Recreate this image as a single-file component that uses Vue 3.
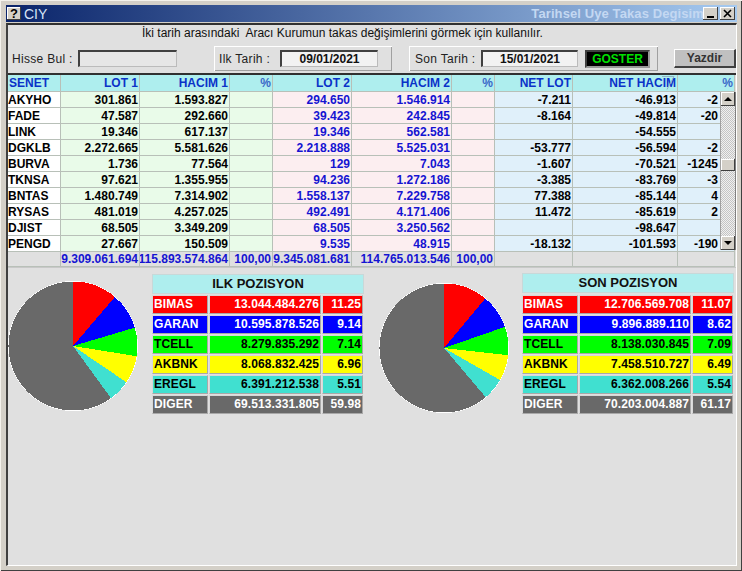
<template>
    <div class="window">
        <div class="title-bar">
            <span class="help-btn">?</span>
            <span class="title-left">CIY</span>
            <span class="title-right">Tarihsel Uye Takas Degisim</span>
            <span class="win-btn min-btn"></span>
            <span class="win-btn close-btn">
                <svg width="9" height="9" viewBox="0 0 9 9">
                    <path d="M1 1 L8 8 M8 1 L1 8" stroke="#000" stroke-width="1.6" fill="none" />
                </svg>
            </span>
        </div>
        <div class="client">
            <div class="info-line">İki tarih arasındaki&nbsp; Aracı Kurumun takas değişimlerini görmek için kullanılır.</div>

            <div class="filter-row">
                <span class="find-label">Hisse Bul :</span>
                <span class="field find-field"></span>
                <div class="date-panel first-panel">
                    <span class="date-label">Ilk Tarih :</span>
                    <span class="field date-field">09/01/2021</span>
                </div>
                <div class="date-panel second-panel">
                    <span class="date-label">Son Tarih :</span>
                    <span class="field date-field">15/01/2021</span>
                    <span class="go-btn">GOSTER</span>
                </div>
                <span class="print-btn"><span>Yazdir</span></span>
            </div>

            <div class="grid">
                <div v-for="(h, i) in headers" :key="h.key" class="cell head" :class="{ left: i === 0, light: h.label === '%' }">
                    <span>{{ h.label }}</span>
                </div>
                <template v-for="row in rows" :key="row[0]">
                    <div v-for="(val, i) in row" :key="i" class="cell" :class="cellClass(i)">
                        <span>{{ val }}</span>
                    </div>
                </template>
                <div v-for="(val, i) in totals" :key="'t' + i" class="cell total">
                    <span>{{ val }}</span>
                </div>

                <svg class="sort-mark" width="14" height="14" viewBox="0 0 14 14">
                    <path d="M1 0.5 H13 L6 13.5" fill="none" stroke="#8fb4c4" stroke-width="1" />
                </svg>
                <div class="scrollbar">
                    <span class="scroll-btn"><i class="arrow up"></i></span>
                    <span class="scroll-thumb"></span>
                    <span class="scroll-btn"><i class="arrow down"></i></span>
                </div>
            </div>

            <div class="positions">
                <div v-for="(pos, p) in positions" :key="pos.title" class="position" :class="'pos-' + p">
                    <svg class="pie" width="130" height="130" viewBox="0 0 130 130" shape-rendering="crispEdges">
                        <circle cx="65" cy="65" r="65" fill="#fff" />
                        <path v-for="s in slices(pos.items)" :key="s.name" :d="s.d" :fill="s.color" />
                    </svg>
                    <div class="pos-table">
                        <div class="pos-title">{{ pos.title }}</div>
                        <div v-for="item in pos.items" :key="item.name" class="pos-row"
                            :style="{ '--row-bg': item.color, '--row-fg': item.text }">
                            <span class="pos-cell pos-name">{{ item.name }}</span>
                            <span class="pos-cell pos-val">{{ item.value }}</span>
                            <span class="pos-cell pos-pct">{{ item.pct }}</span>
                        </div>
                    </div>
                </div>
            </div>
        </div>
    </div>
</template>

<script setup>
const headers = [
    { key: 'senet', label: 'SENET' },
    { key: 'lot1', label: 'LOT 1' },
    { key: 'hacim1', label: 'HACIM 1' },
    { key: 'p1', label: '%' },
    { key: 'lot2', label: 'LOT 2' },
    { key: 'hacim2', label: 'HACIM 2' },
    { key: 'p2', label: '%' },
    { key: 'netlot', label: 'NET LOT' },
    { key: 'nethacim', label: 'NET HACIM' },
    { key: 'p3', label: '%' }
];

const rows = [
    ['AKYHO', '301.861', '1.593.827', '', '294.650', '1.546.914', '', '-7.211', '-46.913', '-2'],
    ['FADE', '47.587', '292.660', '', '39.423', '242.845', '', '-8.164', '-49.814', '-20'],
    ['LINK', '19.346', '617.137', '', '19.346', '562.581', '', '', '-54.555', ''],
    ['DGKLB', '2.272.665', '5.581.626', '', '2.218.888', '5.525.031', '', '-53.777', '-56.594', '-2'],
    ['BURVA', '1.736', '77.564', '', '129', '7.043', '', '-1.607', '-70.521', '-1245'],
    ['TKNSA', '97.621', '1.355.955', '', '94.236', '1.272.186', '', '-3.385', '-83.769', '-3'],
    ['BNTAS', '1.480.749', '7.314.902', '', '1.558.137', '7.229.758', '', '77.388', '-85.144', '4'],
    ['RYSAS', '481.019', '4.257.025', '', '492.491', '4.171.406', '', '11.472', '-85.619', '2'],
    ['DJIST', '68.505', '3.349.209', '', '68.505', '3.250.562', '', '', '-98.647', ''],
    ['PENGD', '27.667', '150.509', '', '9.535', '48.915', '', '-18.132', '-101.593', '-190']
];

const totals = ['', '9.309.061.694', '115.893.574.864', '100,00', '9.345.081.681', '114.765.013.546', '100,00', '', '', ''];

const palette = {
    BIMAS: ['#ff0000', '#fff'],
    GARAN: ['#0000ff', '#fff'],
    TCELL: ['#00ff00', '#000'],
    AKBNK: ['#ffff00', '#000'],
    EREGL: ['#40e0d0', '#000'],
    DIGER: ['#696969', '#fff']
};

function items(list) {
    return list.map(([name, value, pct]) => ({
        name, value, pct, color: palette[name][0], text: palette[name][1]
    }));
}

const positions = [
    {
        title: 'ILK POZISYON',
        items: items([
            ['BIMAS', '13.044.484.276', '11.25'],
            ['GARAN', '10.595.878.526', '9.14'],
            ['TCELL', '8.279.835.292', '7.14'],
            ['AKBNK', '8.068.832.425', '6.96'],
            ['EREGL', '6.391.212.538', '5.51'],
            ['DIGER', '69.513.331.805', '59.98']
        ])
    },
    {
        title: 'SON POZISYON',
        items: items([
            ['BIMAS', '12.706.569.708', '11.07'],
            ['GARAN', '9.896.889.110', '8.62'],
            ['TCELL', '8.138.030.845', '7.09'],
            ['AKBNK', '7.458.510.727', '6.49'],
            ['EREGL', '6.362.008.266', '5.54'],
            ['DIGER', '70.203.004.887', '61.17']
        ])
    }
];

function cellClass(i) {
    if (i === 0) return 'name';
    if (i <= 3) return 'green';
    if (i <= 6) return 'pink';
    return i === 9 ? 'blue last' : 'blue';
}

// pie wedges run clockwise from 12 o'clock
function slices(list) {
    let start = 0;
    return list.map((item) => {
        const end = start + parseFloat(item.pct) / 100;
        const a0 = start * Math.PI * 2;
        const a1 = end * Math.PI * 2;
        const large = end - start > 0.5 ? 1 : 0;
        const x0 = (65 + 64.5 * Math.sin(a0)).toFixed(2);
        const y0 = (65 - 64.5 * Math.cos(a0)).toFixed(2);
        const x1 = (65 + 64.5 * Math.sin(a1)).toFixed(2);
        const y1 = (65 - 64.5 * Math.cos(a1)).toFixed(2);
        start = end;
        return {
            name: item.name,
            color: item.color,
            d: `M65 65 L${x0} ${y0} A64.5 64.5 0 ${large} 1 ${x1} ${y1} Z`
        };
    });
}
</script>

<style scoped>
.window {
    width: 742px;
    height: 571px;
    box-sizing: border-box;
    padding: 5px 5px 5px 6px;
    background: #d4d0c8;
    box-shadow: inset 1px 1px 0 #f4f2ec, inset -1px -1px 0 #404040;
    font-family: "Liberation Sans", Arial, sans-serif;
    display: flex;
    flex-direction: column;
    overflow: hidden;
}

.title-bar {
    height: 17px;
    flex: none;
    display: flex;
    align-items: center;
    background: linear-gradient(90deg, #0a246a, #a6caf0);
    margin-bottom: 1px;
}

.help-btn {
    width: 14px;
    height: 13px;
    margin-left: 1px;
    background: #d4d0c8;
    box-shadow: inset -1px -1px 0 #404040, inset 1px 1px 0 #fff;
    font-size: 13px;
    font-weight: bold;
    text-align: center;
    line-height: 13px;
}

.title-left {
    margin-left: 3px;
    color: #d6e4f7;
    font-size: 14px;
    flex: 1;
}

.title-right {
    color: #c4d8f2;
    font-size: 13px;
    font-weight: bold;
    letter-spacing: 0.1px;
    white-space: nowrap;
    margin-right: -1px;
}

.win-btn {
    width: 15px;
    height: 13px;
    background: #d4d0c8;
    box-shadow: inset -1px -1px 0 #404040, inset 1px 1px 0 #fff;
    margin-right: 2px;
    display: flex;
    align-items: center;
    justify-content: center;
    position: relative;
}

.min-btn::after {
    content: "";
    position: absolute;
    left: 4px;
    bottom: 2px;
    width: 7px;
    height: 2px;
    background: #000;
}

.client {
    flex: 1;
    min-height: 0;
    border-top: 2px solid #303030;
    border-left: 2px solid #404040;
    border-right: 1px solid #fff;
    border-bottom: 1px solid #fff;
    background: #e0e0e0;
    display: flex;
    flex-direction: column;
}

.info-line {
    height: 19px;
    padding-left: 134px;
    font-size: 12px;
    line-height: 17px;
    color: #111;
    white-space: nowrap;
}

.filter-row {
    height: 29px;
    display: flex;
    align-items: center;
    font-size: 12px;
    color: #222;
}

.find-label {
    margin-left: 4px;
    width: 66px;
    letter-spacing: 0.3px;
}

.field {
    height: 17px;
    box-sizing: border-box;
    border-top: 2px solid #404040;
    border-left: 2px solid #404040;
    border-right: 1px solid #bbb;
    border-bottom: 1px solid #bbb;
    background: #f2f2f2;
    display: flex;
    align-items: center;
    justify-content: center;
    font-weight: bold;
    color: #111;
}

.find-field {
    width: 99px;
    background: #e6e6e6;
}

.date-panel {
    height: 25px;
    display: flex;
    align-items: center;
    box-sizing: border-box;
    background: #e0e0e0;
    box-shadow: inset 1px 1px 0 #fff, inset -1px -1px 0 #a0a0a0;
}

.first-panel {
    margin-left: 37px;
    width: 178px;
}

.first-panel .date-label {
    margin-left: 5px;
    width: 61px;
}

.first-panel .date-field {
    width: 98px;
}

.second-panel {
    margin-left: 17px;
    width: 249px;
}

.second-panel .date-label {
    margin-left: 6px;
    width: 66px;
}

.second-panel .date-field {
    width: 97px;
}

.date-label {
    letter-spacing: 0.3px;
}

.go-btn {
    margin-left: 7px;
    width: 65px;
    height: 18px;
    box-sizing: border-box;
    border: 2px solid #404040;
    border-right-color: #999;
    border-bottom-color: #999;
    background: #000;
    color: #00e000;
    font-weight: bold;
    display: flex;
    align-items: center;
    justify-content: center;
}

.print-btn {
    margin-left: 16px;
    width: 62px;
    height: 19px;
    flex: none;
    box-sizing: border-box;
    background: #c0c0c0;
    border-top: 1px solid #fff;
    border-left: 1px solid #fff;
    border-right: 2px solid #404040;
    border-bottom: 2px solid #404040;
    color: #333;
    font-weight: bold;
    display: flex;
    align-items: center;
    justify-content: center;
}

.grid {
    position: relative;
    display: grid;
    grid-template-columns: 53px 79px 90px 43px 79px 100px 43px 78px 105px 57px;
    grid-template-rows: 17px repeat(10, 16px) 15px;
    border-top: 2px solid #303030;
    font-size: 12px;
    font-weight: bold;
    width: 728px;
    box-sizing: border-box;
    border-bottom: 1px solid #c8c8c8;
}

.cell {
    display: flex;
    align-items: center;
    justify-content: flex-end;
    overflow: hidden;
    white-space: nowrap;
    box-sizing: border-box;
    border-right: 1px solid #b8c0b8;
    border-bottom: 1px solid #b8c0b8;
    padding-right: 1px;
    color: #000;
}

.head {
    background: #aeeeee;
    color: #0a32c8;
}

.head.light {
    color: #3a68c8;
}

.left {
    justify-content: flex-start;
    padding-left: 1px;
}

.name {
    justify-content: flex-start;
    background: #fff;
}

.green {
    background: #e9fbe9;
}

.pink {
    background: #fceef0;
    color: #1414d2;
}

.blue {
    background: #e0f0fa;
}

.last {
    padding-right: 16px;
}

.total {
    background: #e0e0e0;
    color: #1414d2;
}

.sort-mark {
    position: absolute;
    left: 653px;
    top: 1px;
}

.scrollbar {
    position: absolute;
    left: 713px;
    top: 17px;
    width: 14px;
    height: 158px;
    display: flex;
    flex-direction: column;
    justify-content: space-between;
    background: repeating-conic-gradient(#c4c4c4 0 25%, #f0f0f0 0 50%) 0 0 / 2px 2px;
    box-shadow: -1px 0 0 #a0a0a0, 1px 0 0 #808080;
}

.scroll-btn,
.scroll-thumb {
    display: flex;
    align-items: center;
    justify-content: center;
    width: 14px;
    height: 14px;
    background: #d4d0c8;
    box-shadow: inset -1px -1px 0 #404040, inset 1px 1px 0 #fff;
}

.scroll-thumb {
    position: absolute;
    top: 67px;
    height: 12px;
}

.arrow {
    width: 0;
    height: 0;
    border-left: 4px solid transparent;
    border-right: 4px solid transparent;
}

.arrow.up {
    border-bottom: 4px solid #000;
}

.arrow.down {
    border-top: 4px solid #000;
}

.positions {
    display: flex;
    padding-top: 6px;
}

.position {
    display: flex;
    width: 370px;
    flex: none;
}

.pos-0 .pie {
    margin: 7px 14px 0 0;
}

.pos-1 .pie {
    margin: 9px 13px 0 1px;
}

.pos-1 .pos-table {
    margin-top: -1px;
}

.pos-1 .pos-title {
    margin-bottom: 2px;
}

.pie {
    flex: none;
}

.pos-table {
    width: 212px;
    flex: none;
}

.pos-title {
    height: 20px;
    margin-bottom: 1px;
    background: #aeeeee;
    box-shadow: inset 0 0 0 1px #c8d8d8;
    text-align: center;
    font-size: 13px;
    font-weight: bold;
    line-height: 20px;
    color: #111;
}

.pos-row {
    display: grid;
    grid-template-columns: 56px 112px 41px;
    column-gap: 1px;
    height: 20px;
    font-size: 12px;
    font-weight: bold;
    letter-spacing: 0.1px;
}

.pos-cell {
    height: 19px;
    background: var(--row-bg);
    color: var(--row-fg);
    border: 1px solid #a8a8a8;
    border-left-color: #d8d8d8;
    border-top-color: #d8d8d8;
    box-sizing: border-box;
    line-height: 17px;
    text-align: right;
    white-space: nowrap;
    overflow: hidden;
    padding-right: 1px;
}

.pos-name {
    text-align: left;
    padding-left: 1px;
    padding-right: 0;
}
</style>

<style>
html,
body {
    margin: 0;
    background: #e0e0e0;
}
</style>
